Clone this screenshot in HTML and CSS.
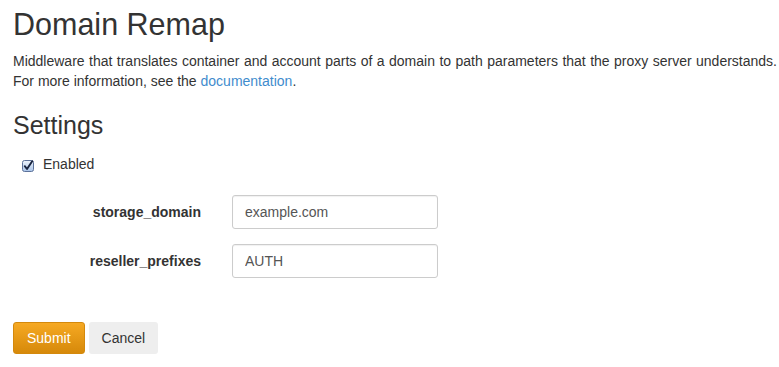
FILE: index.html
```html
<!DOCTYPE html>
<html lang="en">
<head>
<meta charset="utf-8">
<title>Domain Remap</title>
<link rel="stylesheet" href="styles.css">
</head>
<body>
<div class="page">
  <h1 class="title">Domain Remap</h1>
  <p class="desc"><span class="desc-line">Middleware that translates container and account parts of a domain to path parameters that the proxy server understands.</span>For more information, see the <a href="#" class="link">documentation</a>.</p>
  <h2 class="subtitle">Settings</h2>
  <label class="check">
    <svg class="check-box" width="12" height="12" viewBox="0 0 12 12" aria-hidden="true">
      <defs>
        <linearGradient id="cb" x1="0" y1="0" x2="0" y2="1">
          <stop offset="0" stop-color="#eef4fc"/>
          <stop offset="1" stop-color="#a8c3e8"/>
        </linearGradient>
      </defs>
      <rect x="0.5" y="0.5" width="11" height="11" rx="2" fill="url(#cb)" stroke="#5d729a"/>
      <path d="M2.8 6.2 L5 9 L10.2 1.2" fill="none" stroke="#17233f" stroke-width="1.9" stroke-linecap="round" stroke-linejoin="round"/>
    </svg>
    <span>Enabled</span>
  </label>
  <div class="form">
    <label class="form-label" for="sd">storage_domain</label>
    <input class="form-input" id="sd" type="text" value="example.com">
    <label class="form-label" for="rp">reseller_prefixes</label>
    <input class="form-input" id="rp" type="text" value="AUTH">
  </div>
  <div class="actions">
    <button class="btn btn-primary" type="button">Submit</button>
    <button class="btn btn-default" type="button">Cancel</button>
  </div>
</div>
</body>
</html>
```

FILE: styles.css
```css
html, body {
  margin: 0;
  padding: 0;
  background: #ffffff;
  overflow: hidden;
}

body {
  font-family: "Liberation Sans", Arial, Helvetica, sans-serif;
  font-size: 14px;
  line-height: 20px;
  color: #333333;
}

.page {
  padding: 8px 2px 0 13px;
}

.title {
  margin: 0;
  font-size: 30.5px;
  line-height: 33px;
  font-weight: 400;
  color: #333333;
}

.desc {
  margin: 10px 0 0 0;
  font-size: 14px;
  line-height: 20px;
  color: #333333;
}

.desc-line {
  display: block;
  text-align: justify;
  text-align-last: justify;
}

.link {
  color: #3f8ccd;
  text-decoration: none;
}

.subtitle {
  margin: 21px 0 0 0;
  font-size: 25px;
  line-height: 26px;
  font-weight: 400;
  color: #333333;
}

.check {
  display: flex;
  align-items: center;
  gap: 9px;
  margin: 16px 0 0 9px;
  height: 20px;
}

.check-box {
  display: block;
  margin-top: 3px;
}

.form {
  display: grid;
  grid-template-columns: 188px 206px;
  column-gap: 31px;
  row-gap: 15px;
  align-items: center;
  margin-top: 21px;
}

.form-label {
  text-align: right;
  font-weight: 700;
  color: #333333;
}

.form-input {
  box-sizing: border-box;
  height: 34px;
  width: 206px;
  margin: 0;
  padding: 0 12px;
  border: 1px solid #cccccc;
  border-radius: 3px;
  box-shadow: inset 0 1px 1px rgba(0, 0, 0, 0.06);
  font-family: "Liberation Sans", Arial, Helvetica, sans-serif;
  font-size: 14px;
  color: #555555;
  background: #ffffff;
}

.actions {
  display: flex;
  gap: 4px;
  margin-top: 44px;
}

.btn {
  box-sizing: border-box;
  height: 32px;
  padding: 0 13px;
  border: none;
  border-radius: 3px;
  font-family: "Liberation Sans", Arial, Helvetica, sans-serif;
  font-size: 14px;
  line-height: 32px;
  cursor: pointer;
}

.btn-primary {
  color: #ffffff;
  background: linear-gradient(#f6a923, #d6890a);
  border: 1px solid #d4890c;
  line-height: 30px;
}

.btn-default {
  color: #333333;
  background: #eeeeee;
}
```
